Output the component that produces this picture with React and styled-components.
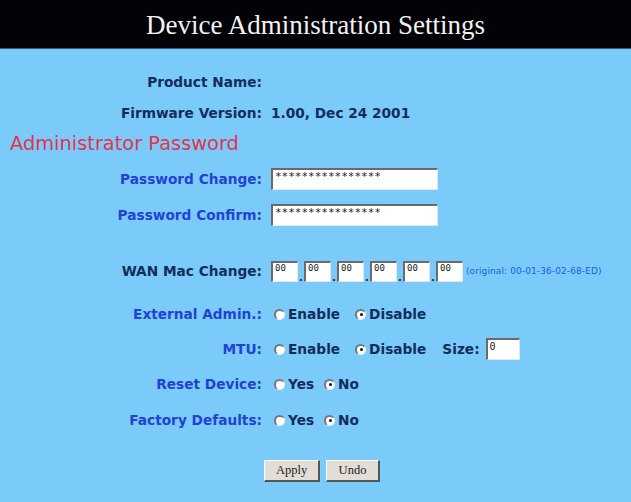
import React from 'react';
import styled, { createGlobalStyle } from 'styled-components';

const Global = createGlobalStyle`
  html, body { margin: 0; padding: 0; }
  body {
    background: #7acbf9;
    font-family: "DejaVu Sans", Verdana, sans-serif;
  }
`;

const Header = styled.div`
  height: 49px;
  background: #030307;
  border-bottom: 1px solid #2d5f80;
  display: flex;
  align-items: center;
  justify-content: center;
  color: #f2f2f2;
  font-family: "Liberation Serif", "Times New Roman", serif;
  font-size: 27px;
  padding-top: 3px;
  box-sizing: border-box;
`;

const Form = styled.div`
  padding-top: 18px;
`;

const Row = styled.div`
  display: flex;
  align-items: center;
  height: 30px;
  margin-top: ${p => p.mt || 0}px;
`;

const Label = styled.div`
  width: 262px;
  flex: none;
  text-align: right;
  font-weight: bold;
  font-size: 13.7px;
  color: ${p => (p.blue ? '#2242d4' : '#142c5c')};
`;

const Value = styled.div`
  margin-left: 9px;
  display: flex;
  align-items: center;
  font-weight: bold;
  font-size: 13.7px;
  color: #142c5c;
`;

const Section = styled.div`
  padding-left: 10px;
  font-size: 19.4px;
  color: #e23450;
`;

const TextBox = styled.div`
  box-sizing: border-box;
  width: ${p => p.w}px;
  height: ${p => p.h || 22}px;
  background: #fff;
  border-top: 2px solid #6a6a6a;
  border-left: 2px solid #6a6a6a;
  border-right: 1px solid #e6e6e6;
  border-bottom: 1px solid #e6e6e6;
  font-family: "DejaVu Sans Mono", monospace;
  font-weight: normal;
  font-size: ${p => p.fs || 10}px;
  color: #222;
  padding: 1px 2px;
  line-height: 1.1;
  white-space: nowrap;
  overflow: hidden;
`;

const Dot = styled.span`
  width: 6px;
  align-self: flex-end;
  font-size: 10px;
  color: #142c5c;
  line-height: 8px;
  text-align: center;
`;

const Original = styled.span`
  margin-left: 3px;
  font-size: 9px;
  font-weight: normal;
  color: #2458e8;
  letter-spacing: 0.1px;
`;

const Radio = styled.span`
  box-sizing: border-box;
  width: 11px;
  height: 11px;
  border-radius: 50%;
  background: #fff;
  border-top: 2px solid #777;
  border-left: 2px solid #777;
  border-right: 1px solid #eee;
  border-bottom: 1px solid #eee;
  display: inline-flex;
  align-items: center;
  justify-content: center;
  margin-right: 3px;
  &::after {
    content: '';
    width: 3px;
    height: 3px;
    border-radius: 50%;
    background: ${p => (p.checked ? '#111' : 'transparent')};
  }
`;

const Option = styled.span`
  display: inline-flex;
  align-items: center;
  margin-left: ${p => p.ml || 0}px;
`;

const Buttons = styled.div`
  display: flex;
  gap: 6px;
  margin-left: 264px;
`;

const Button = styled.button`
  width: ${p => p.w}px;
  height: 22px;
  background: #e2ddd6;
  border-top: 1px solid #fff;
  border-left: 1px solid #fff;
  border-right: 2px solid #555;
  border-bottom: 2px solid #555;
  font-family: "Liberation Serif", "Times New Roman", serif;
  font-size: 12.5px;
  color: #222;
  padding: 0;
`;

const RadioPair = ({ a, b, on, gap }) => (
  <>
    <Option ml={3}><Radio checked={on === a} />{a}</Option>
    <Option ml={gap}><Radio checked={on === b} />{b}</Option>
  </>
);

export default function App() {
  return (
    <>
      <Global />
      <Header>Device Administration Settings</Header>
      <Form>
        <Row mt={0}>
          <Label>Product Name:</Label>
          <Value></Value>
        </Row>
        <Row mt={1}>
          <Label>Firmware Version:</Label>
          <Value>1.00, Dec 24 2001</Value>
        </Row>
        <Row mt={0}>
          <Section>Administrator Password</Section>
        </Row>
        <Row mt={6}>
          <Label blue>Password Change:</Label>
          <Value><TextBox w={167} fs={11}>****************</TextBox></Value>
        </Row>
        <Row mt={6}>
          <Label blue>Password Confirm:</Label>
          <Value><TextBox w={167} fs={11}>****************</TextBox></Value>
        </Row>
        <Row mt={26}>
          <Label>WAN Mac Change:</Label>
          <Value>
            {[0, 1, 2, 3, 4, 5].map(i => (
              <React.Fragment key={i}>
                {i > 0 && <Dot>.</Dot>}
                <TextBox w={27} h={21} fs={9}>00</TextBox>
              </React.Fragment>
            ))}
            <Original>(original: 00-01-36-02-68-ED)</Original>
          </Value>
        </Row>
        <Row mt={13}>
          <Label blue>External Admin.:</Label>
          <Value><RadioPair a="Enable" b="Disable" on="Disable" gap={15} /></Value>
        </Row>
        <Row mt={5}>
          <Label blue>MTU:</Label>
          <Value>
            <RadioPair a="Enable" b="Disable" on="Disable" gap={15} />
            <Option ml={16}>Size:</Option>
            <Option ml={6}><TextBox w={34} h={22} fs={10}>0</TextBox></Option>
          </Value>
        </Row>
        <Row mt={5}>
          <Label blue>Reset Device:</Label>
          <Value><RadioPair a="Yes" b="No" on="No" gap={10} /></Value>
        </Row>
        <Row mt={6}>
          <Label blue>Factory Defaults:</Label>
          <Value><RadioPair a="Yes" b="No" on="No" gap={10} /></Value>
        </Row>
        <Row mt={21}>
          <Buttons>
            <Button w={56}>Apply</Button>
            <Button w={54}>Undo</Button>
          </Buttons>
        </Row>
      </Form>
    </>
  );
}
